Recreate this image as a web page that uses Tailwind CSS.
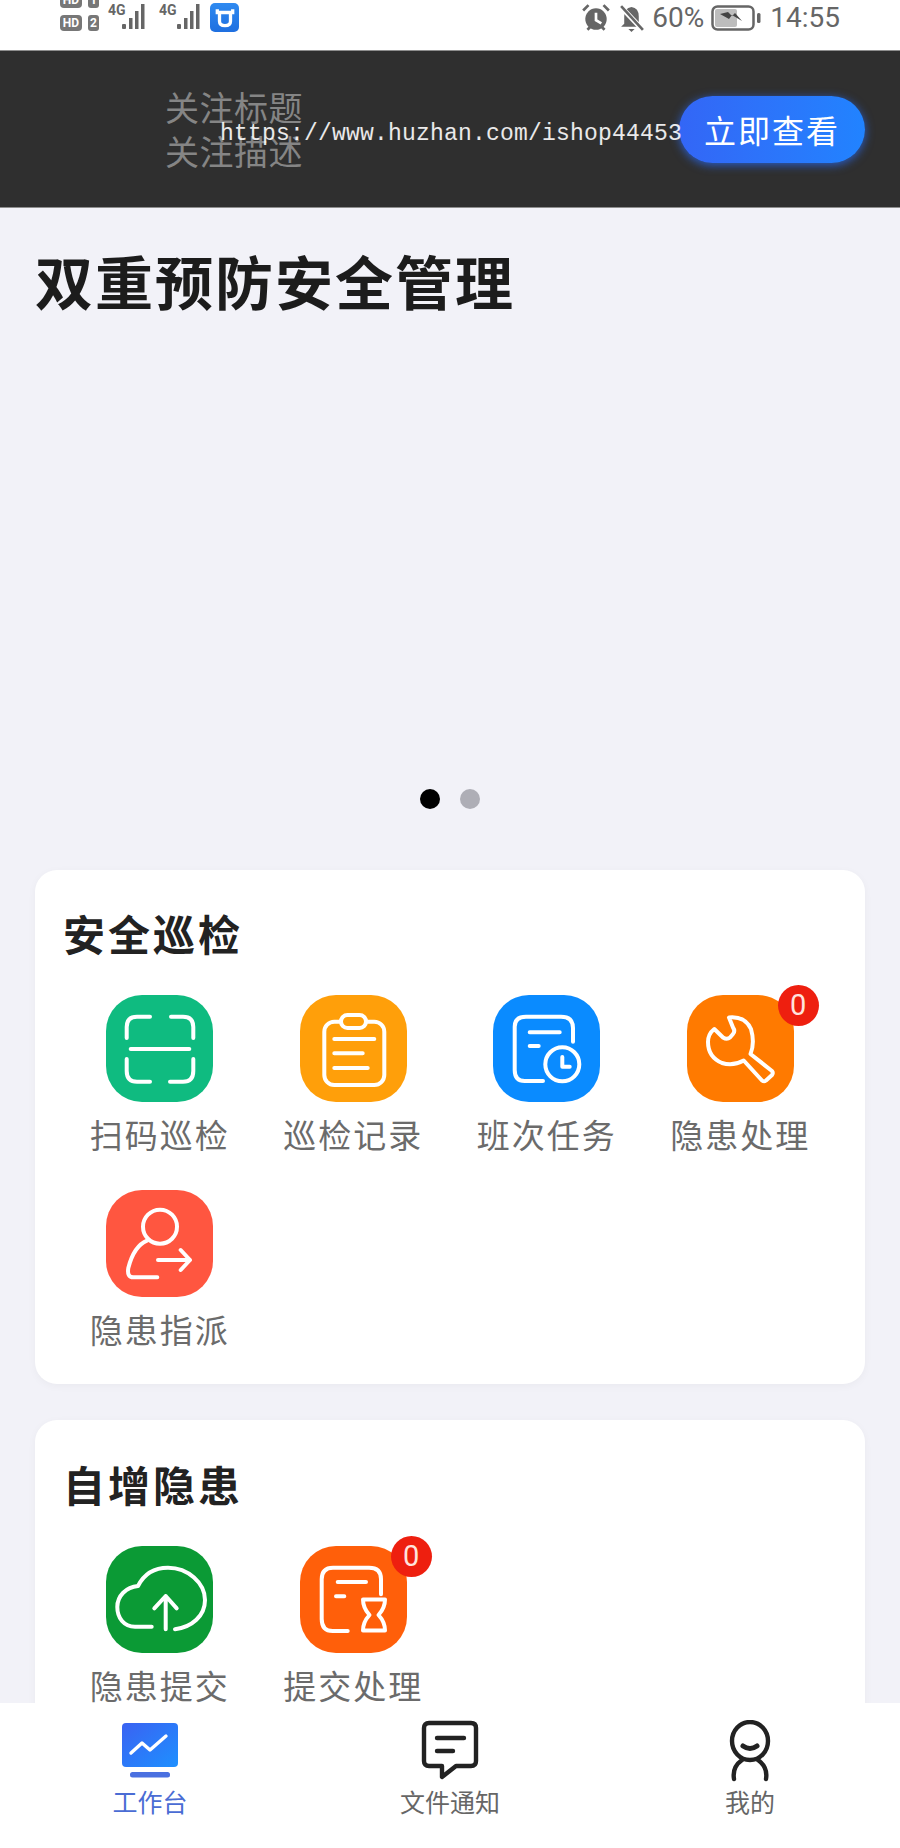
<!DOCTYPE html>
<html lang="zh-CN">
<head>
    <meta charset="UTF-8">
    <meta name="viewport" content="width=device-width, initial-scale=1.0">
    <title>双重预防安全管理</title>
    <script src="https://cdn.jsdelivr.net/npm/@tailwindcss/browser@4"></script>
</head>
<body class="bg-white font-['Noto_Sans_CJK_SC','Noto_Sans',sans-serif]">
<div class="relative w-[900px] h-[1848px] overflow-hidden flex flex-col bg-[#f2f2f8]">

    <!-- status bar -->
    <div class="h-[50px] shrink-0 bg-white flex justify-between overflow-hidden text-[#666]">
        <div class="flex items-start pl-[60px]">
            <div class="flex flex-col gap-[7px] -mt-[8px] w-[40px]">
                <div class="flex gap-[6px]">
                    <span class="w-[22px] h-[16px] rounded-[4px] bg-[#777] text-white text-[12px] leading-[16px] font-bold text-center font-['Roboto',sans-serif]">HD</span>
                    <span class="w-[11px] h-[16px] rounded-[3px] bg-[#777] text-white text-[12px] leading-[16px] font-bold text-center font-['Roboto',sans-serif]">1</span>
                </div>
                <div class="flex gap-[6px]">
                    <span class="w-[22px] h-[16px] rounded-[4px] bg-[#777] text-white text-[12px] leading-[16px] font-bold text-center font-['Roboto',sans-serif]">HD</span>
                    <span class="w-[11px] h-[16px] rounded-[3px] bg-[#777] text-white text-[12px] leading-[16px] font-bold text-center font-['Roboto',sans-serif]">2</span>
                </div>
            </div>
            <div class="relative w-[44px] h-[32px] ml-[8px] mt-[2px]">
                <span class="absolute left-0 top-[1px] text-[14px] leading-[14px] font-bold text-[#666] font-['Roboto',sans-serif]">4G</span>
                <svg class="absolute left-[14px] top-0" width="30" height="30" viewBox="0 0 30 30" fill="#666"><rect x="0" y="22" width="4" height="5" rx="1"/><rect x="7" y="16" width="3.5" height="11"/><rect x="13" y="9" width="3.5" height="18"/><rect x="19" y="2" width="3.5" height="25"/></svg>
            </div>
            <div class="relative w-[44px] h-[32px] ml-[7px] mt-[2px]">
                <span class="absolute left-0 top-[1px] text-[14px] leading-[14px] font-bold text-[#666] font-['Roboto',sans-serif]">4G</span>
                <svg class="absolute left-[14px] top-0" width="30" height="30" viewBox="0 0 30 30" fill="#666"><rect x="4" y="22" width="4" height="5" rx="1"/><rect x="11" y="16" width="3.5" height="11"/><rect x="17" y="9" width="3.5" height="18"/><rect x="23" y="2" width="3.5" height="25"/></svg>
            </div>
            <div class="w-[29px] h-[29px] ml-[7px] mt-[3px] rounded-[5px] bg-gradient-to-b from-[#2f8af0] to-[#1f6fe0] flex items-center justify-center">
                <svg width="22" height="22" viewBox="0 0 20 20" fill="none" stroke="#fff" stroke-width="3"><path d="M3 2v3h14V2"/><path d="M5 6v7q0 4 5 4t5-4V6"/></svg>
            </div>
        </div>
        <div class="flex items-center pr-[60px] h-[36px]">
            <svg width="30" height="28" viewBox="0 0 28 26" fill="#666"><circle cx="14" cy="14" r="10"/><path d="M14 8v7l5 3" fill="none" stroke="#fff" stroke-width="2.5"/><path d="M2 6l5-5M26 6l-5-5" fill="none" stroke="#666" stroke-width="2.5"/><path d="M6 24l3-3M22 24l-3-3" fill="none" stroke="#666" stroke-width="2.5"/></svg>
            <svg class="ml-[7px]" width="27" height="27" viewBox="0 0 26 26" fill="#666"><path d="M13 2q-7 1-7 9v7l-3 3h20l-3-3v-7q0-8-7-9z"/><path d="M10 23h6l-3 3z"/><path d="M2 1l22 23" stroke="#fff" stroke-width="5"/><path d="M3 1l21 23" stroke="#666" stroke-width="2.5"/></svg>
            <span class="ml-[7px] text-[28px] leading-[34px] font-['Roboto',sans-serif]">60%</span>
            <svg class="ml-[7px]" width="50" height="26" viewBox="0 0 50 26"><rect x="1.5" y="1.5" width="41" height="23" rx="5" fill="none" stroke="#666" stroke-width="2.5"/><rect x="4" y="4" width="22" height="18" rx="2" fill="#bdbdbd"/><path d="M9 9l9 5 3-4 10 6-7-8-3 3-4-4z" fill="#444"/><rect x="46" y="8" width="3.5" height="10" rx="1.5" fill="#666"/></svg>
            <span class="ml-[9px] text-[28px] leading-[34px] font-['Roboto',sans-serif]">14:55</span>
        </div>
    </div>

    <!-- official account banner -->
    <div class="relative h-[158px] shrink-0 bg-[#2f2f2f] border-y border-[#8e8e8e] flex items-center justify-between pl-[165px] pr-[35px]">
        <div class="text-[34px] leading-[44px] tracking-[0.5px] text-[#858585]">
            <p>关注标题</p>
            <p>关注描述</p>
        </div>
        <div class="w-[186px] h-[67px] rounded-full bg-gradient-to-r from-[#3366f6] to-[#2183ff] shadow-[0_2px_10px_rgba(40,110,255,0.75)] flex items-center justify-center text-[32px] tracking-[2px] text-white">立即查看</div>
        <span class="absolute left-[220px] top-[69px] text-[23px] leading-[28px] tracking-[0.2px] text-white/90 font-['Liberation_Mono',monospace]">https://www.huzhan.com/ishop44453</span>
    </div>

    <!-- page content, cut off by the tab bar -->
    <div class="flex-1 min-h-0 overflow-hidden px-[35px]">
        <h1 class="h-[151px] pb-[7px] flex items-center text-[58px] font-bold tracking-[2px] text-[#1c1c1c]">双重预防安全管理</h1>
        <div class="h-[450px] mb-[61px] flex items-end justify-center gap-[20px]">
            <span class="w-[20px] h-[20px] rounded-full bg-black"></span>
            <span class="w-[20px] h-[20px] rounded-full bg-[#aeaeb6]"></span>
        </div>

        <section class="bg-white rounded-[22px] shadow-[0_2px_8px_rgba(0,0,0,0.04)] pt-[39px] pb-[35px] pl-[28px] pr-[28px] mb-[36px]">
            <h2 class="text-[42px] leading-[48px] font-bold tracking-[3px] text-[#222]">安全巡检</h2>
            <div class="grid grid-cols-4 gap-y-[36px] mt-[38px] text-[33px] leading-[40px] tracking-[2px] text-[#6b6b6b]">
                <div class="flex flex-col items-center gap-[12px]">
                    <div class="w-[107px] h-[107px] rounded-[36px] bg-[#0fbb80]">
                        <svg width="107" height="107" viewBox="0 0 107 107" fill="none" stroke="#fff" stroke-width="4" stroke-linecap="round"><path d="M20.7 43V32q0-10.3 10.3-10.3h13"/><path d="M65 21.7h12q10.3 0 10.3 10.3v11"/><path d="M24.7 54h58.6"/><path d="M20.7 64v12q0 10.7 10.3 10.7h13"/><path d="M64 86.7h13q10.3 0 10.3-10.7V64"/></svg>
                    </div>
                    <span>扫码巡检</span>
                </div>
                <div class="flex flex-col items-center gap-[12px]">
                    <div class="w-[107px] h-[107px] rounded-[36px] bg-[#ff9f0a]">
                        <svg width="107" height="107" viewBox="0 0 107 107" fill="none" stroke="#fff" stroke-width="4" stroke-linecap="round"><rect x="24.3" y="26.7" width="60" height="63.3" rx="10"/><rect x="41" y="20" width="25" height="13" rx="6.5" fill="#ff9f0a"/><path d="M34.3 44h40M34.3 58.3h28.4M34.3 73h33.4"/></svg>
                    </div>
                    <span>巡检记录</span>
                </div>
                <div class="flex flex-col items-center gap-[12px]">
                    <div class="w-[107px] h-[107px] rounded-[36px] bg-[#0a8bff]">
                        <svg width="107" height="107" viewBox="0 0 107 107" fill="none" stroke="#fff" stroke-width="4" stroke-linecap="round" stroke-linejoin="round"><path d="M80 46.7V33q0-11.3-12-11.3H33q-11.3 0-11.3 10V75q0 11 10 11H50"/><path d="M36.7 37.3h30M36.7 51h9"/><circle cx="69.3" cy="69.3" r="17"/><path d="M69.3 62v9.7h7.4"/></svg>
                    </div>
                    <span>班次任务</span>
                </div>
                <div class="flex flex-col items-center gap-[12px]">
                    <div class="relative w-[107px] h-[107px] rounded-[36px] bg-[#ff7a00]">
                        <svg width="107" height="107" viewBox="0 0 107 107" fill="none" stroke="#fff" stroke-width="4" stroke-linecap="round" stroke-linejoin="round"><path d="M27.3 34L36 42.5Q40 45 43 42.5L46 39Q48.5 36 46 32.5L42 22.5Q58 21 64 34 68 48 63.5 59L85 76Q86.5 78 85 80L79 85.5Q77 87 75 85.5L56.7 65.5Q46 71.5 35 68 21 62 21 47 21 39 27.3 34z"/></svg>
                        <span class="absolute -top-[10px] -right-[25px] w-[41px] h-[41px] rounded-full bg-[#ee1f0f] text-[#ffe3dd] text-[29px] leading-[41px] tracking-normal text-center font-['Roboto',sans-serif]">0</span>
                    </div>
                    <span>隐患处理</span>
                </div>
                <div class="flex flex-col items-center gap-[12px]">
                    <div class="w-[107px] h-[107px] rounded-[36px] bg-[#ff5640]">
                        <svg width="107" height="107" viewBox="0 0 107 107" fill="none" stroke="#fff" stroke-width="4" stroke-linecap="round" stroke-linejoin="round"><circle cx="54" cy="36.7" r="17"/><path d="M41 50.7Q28 56 22.3 78q-1.5 9.3 5 9.3h24"/><path d="M52 70h32M74.7 60L84 70l-9.3 10"/></svg>
                    </div>
                    <span>隐患指派</span>
                </div>
            </div>
        </section>

        <section class="bg-white rounded-[22px] shadow-[0_2px_8px_rgba(0,0,0,0.04)] pt-[40px] pb-[35px] pl-[28px] pr-[28px]">
            <h2 class="text-[42px] leading-[48px] font-bold tracking-[3px] text-[#222]">自增隐患</h2>
            <div class="grid grid-cols-4 gap-y-[36px] mt-[38px] text-[33px] leading-[40px] tracking-[2px] text-[#6b6b6b]">
                <div class="flex flex-col items-center gap-[12px]">
                    <div class="w-[107px] h-[107px] rounded-[36px] bg-[#0b9a35]">
                        <svg width="107" height="107" viewBox="0 0 107 107" fill="none" stroke="#fff" stroke-width="4" stroke-linecap="round" stroke-linejoin="round"><path d="M45.7 80.7H29C18 80.7 11.3 72 11.3 61 11.3 50 20 41 32 40 38 28 49 21.7 62 21.7 82 21.7 99 37 99 54 99 70 86 81 69 83.3"/><path d="M59.7 83.3V50M48.3 62.3L59.7 50l11 12.3"/></svg>
                    </div>
                    <span>隐患提交</span>
                </div>
                <div class="flex flex-col items-center gap-[12px]">
                    <div class="relative w-[107px] h-[107px] rounded-[36px] bg-[#ff5f0a]">
                        <svg width="107" height="107" viewBox="0 0 107 107" fill="none" stroke="#fff" stroke-width="4" stroke-linecap="round" stroke-linejoin="round"><path d="M81 48.3V33q0-11.3-12-11.3H33q-11.3 0-11.3 11.6V73q0 12 11 12h15"/><path d="M37.7 36H66M36 50.3h8.3"/><path d="M63 53.5H85Q85 62 78.5 69 85 76 85 84.5H63Q63 76 69.5 69 63 62 63 53.5z"/></svg>
                        <span class="absolute -top-[10px] -right-[25px] w-[41px] h-[41px] rounded-full bg-[#ee1f0f] text-[#ffe3dd] text-[29px] leading-[41px] tracking-normal text-center font-['Roboto',sans-serif]">0</span>
                    </div>
                    <span>提交处理</span>
                </div>
            </div>
        </section>
    </div>

    <!-- tab bar -->
    <nav class="h-[145px] shrink-0 bg-white grid grid-cols-3 pt-[17px] text-[25px] leading-[32px] text-[#666]">
        <div class="flex flex-col items-center">
            <svg width="60" height="64" viewBox="0 0 60 64"><defs><linearGradient id="tab-grad" x1="0" y1="0" x2="1" y2="1"><stop offset="0" stop-color="#3a62f2"/><stop offset="1" stop-color="#1e90ff"/></linearGradient></defs><rect x="2" y="3" width="56" height="44" rx="4" fill="url(#tab-grad)"/><path d="M11 33l11-10 8 7 16-14" fill="none" stroke="#fff" stroke-width="3.4" stroke-linecap="round" stroke-linejoin="round"/><rect x="10" y="52" width="40" height="5.5" rx="2.5" fill="#4a70e0"/></svg>
            <span class="mt-[1px] text-[#4a6cd4]">工作台</span>
        </div>
        <div class="flex flex-col items-center">
            <svg width="60" height="64" viewBox="0 0 60 64" fill="none" stroke="#222" stroke-width="4.4" stroke-linecap="round" stroke-linejoin="round"><path d="M9 3h42q5 0 5 5v33q0 5-5 5H36L22 57V46H9q-5 0-5-5V8q0-5 5-5z"/><path d="M17 18h27M17 31h16"/></svg>
            <span class="mt-[1px]">文件通知</span>
        </div>
        <div class="flex flex-col items-center">
            <svg width="60" height="64" viewBox="0 0 60 64" fill="none" stroke="#222" stroke-width="4.4" stroke-linecap="round"><ellipse cx="30" cy="21" rx="18" ry="19"/><path d="M23 26q7 5 14 0" stroke-width="5"/><path d="M22 40Q12 47 14 59M38 40q10 7 8 19"/></svg>
            <span class="mt-[1px]">我的</span>
        </div>
    </nav>
</div>
</body>
</html>
